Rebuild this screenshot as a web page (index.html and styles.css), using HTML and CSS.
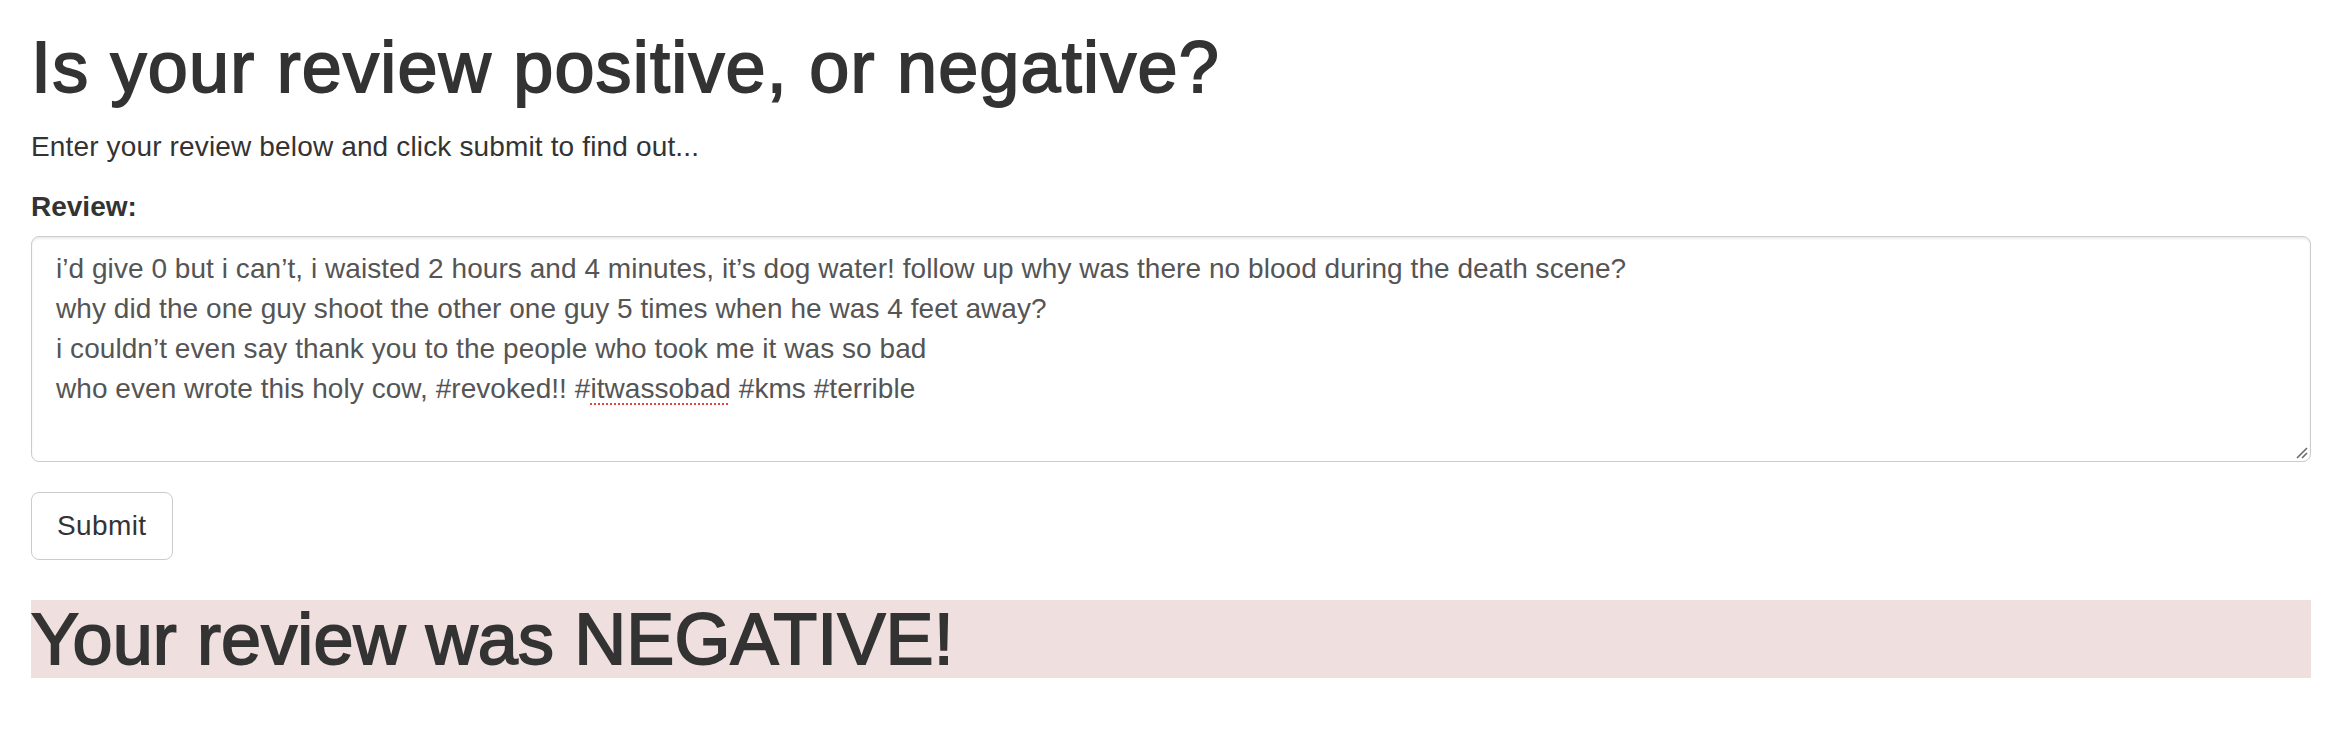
FILE: index.html
```html
<!DOCTYPE html>
<html lang="en">
<head>
<meta charset="utf-8">
<title>Review sentiment</title>
<link rel="stylesheet" href="styles.css">
</head>
<body>
<div class="container">
  <h1 class="title">Is your review positive, or negative?</h1>
  <p class="lead-text">Enter your review below and click submit to find out...</p>
  <form class="review-form">
    <div class="form-group">
      <label class="field-label">Review:</label>
      <div class="textbox" role="textbox" aria-multiline="true">i’d give 0 but i can’t, i waisted 2 hours and 4 minutes, it’s dog water! follow up why was there no blood during the death scene?
why did the one guy shoot the other one guy 5 times when he was 4 feet away?
i couldn’t even say thank you to the people who took me it was so bad
who even wrote this holy cow, #revoked!! #<span class="misspelt">itwassobad</span> #kms #terrible<svg class="grip" width="14" height="14" viewBox="0 0 14 14"><path d="M13 3 L3 13 M13 8 L8 13" stroke="#6b6b6b" stroke-width="1.6" fill="none"/></svg></div>
    </div>
    <button type="button" class="btn">Submit</button>
  </form>
  <h1 class="result">Your review was NEGATIVE!</h1>
</div>
</body>
</html>
```
FILE: styles.css
```css
html, body {
  margin: 0;
  padding: 0;
  background: #fff;
}
body {
  font-family: "Liberation Sans", Arial, Helvetica, sans-serif;
  font-size: 28px;
  line-height: 40px;
  color: #333;
  letter-spacing: 0.15px;
}
.container {
  padding: 0 27px 0 31px;
}
.title {
  margin: 28px 0 20px;
  font-size: 72px;
  line-height: 79px;
  font-weight: 400;
  letter-spacing: 1.2px;
  -webkit-text-stroke: 1.8px #333;
}
.lead-text {
  margin: 0 0 20px;
}
.form-group {
  margin-bottom: 30px;
}
.field-label {
  display: inline-block;
  margin-bottom: 9px;
  font-weight: 700;
  letter-spacing: 0;
}
.textbox {
  position: relative;
  box-sizing: border-box;
  height: 226px;
  padding: 12px 24px;
  border: 1px solid #ccc;
  border-radius: 8px;
  box-shadow: inset 0 2px 2px rgba(0,0,0,.075);
  color: #555;
  white-space: pre-wrap;
  overflow: hidden;
  letter-spacing: 0.05px;
}
.misspelt {
  text-decoration: underline dotted #e8423c;
  text-decoration-thickness: 2px;
  text-underline-offset: 5px;
}
.grip {
  position: absolute;
  right: 2px;
  bottom: 2px;
}
.btn {
  display: block;
  box-sizing: border-box;
  height: 68px;
  padding: 12px 25px;
  border: 1px solid #ccc;
  border-radius: 8px;
  background: #fff;
  color: #333;
  font: inherit;
  line-height: 40px;
  letter-spacing: 0.4px;
}
.result {
  margin: 40px 0 0;
  font-size: 72px;
  line-height: 78px;
  font-weight: 400;
  letter-spacing: 0.1px;
  -webkit-text-stroke: 1.8px #333;
  background: #efdfdf;
}
```
